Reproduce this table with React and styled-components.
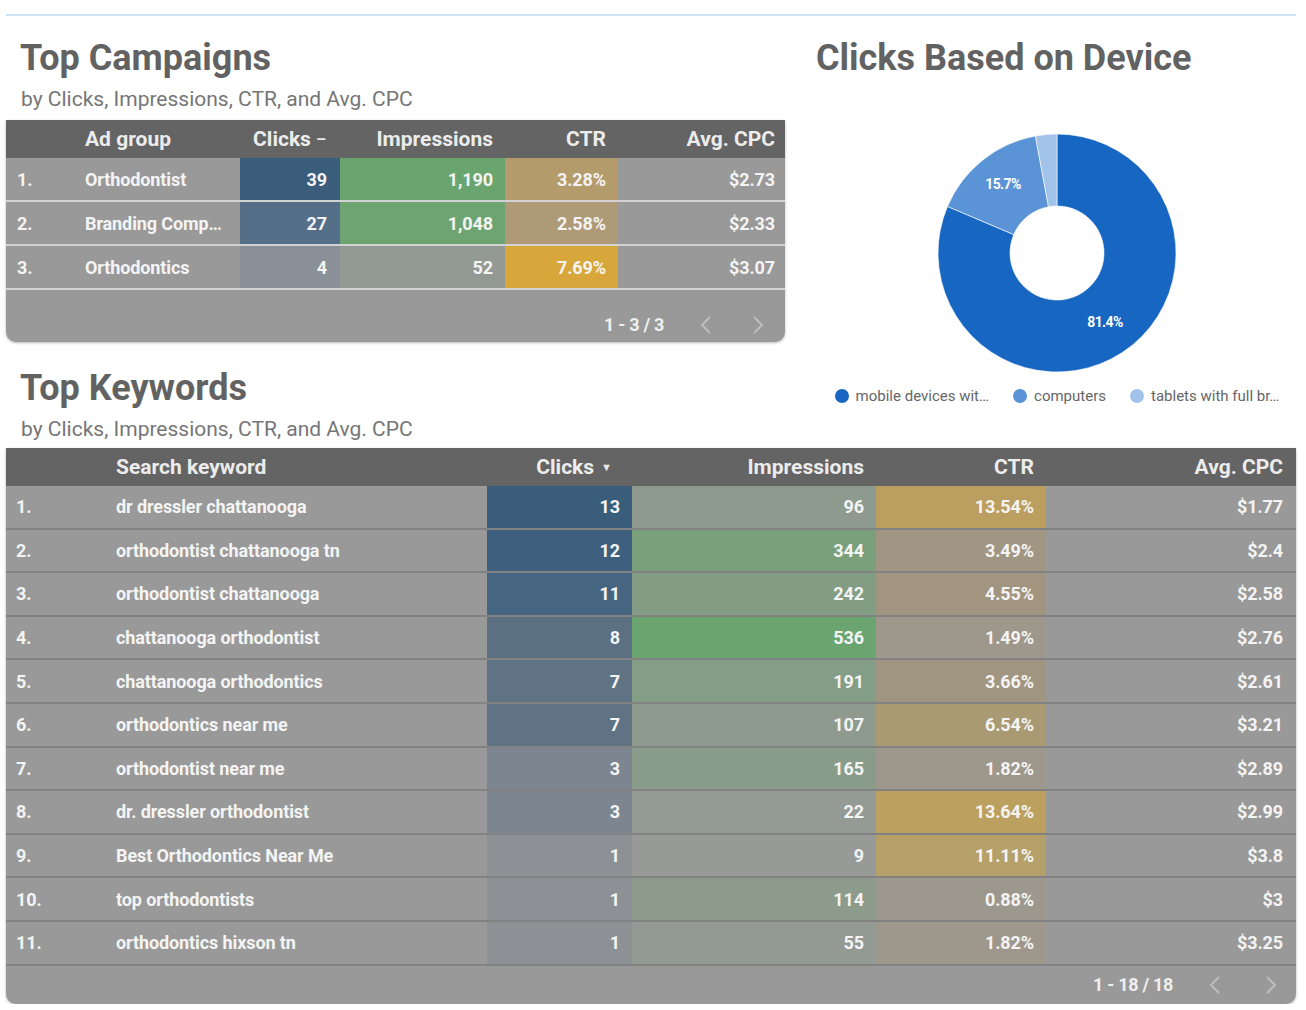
import React from 'react';
import styled, { createGlobalStyle } from 'styled-components';

const GlobalStyle = createGlobalStyle`
  body {
    margin: 0;
    background: #ffffff;
    font-family: Roboto, "Liberation Sans", Arial, sans-serif;
  }
`;

const Page = styled.div`
  width: 1306px;
  box-sizing: border-box;
  padding: 14px 10px 0 6px;
`;

const TopRule = styled.div`
  height: 2px;
  background: #cbe4f9;
`;

const Layout = styled.div`
  display: grid;
  grid-template-columns: 779px 1fr;
  column-gap: 33px;
  margin-top: 21px;
`;

const CampaignBlock = styled.section`
  grid-column: 1;
  grid-row: 1;
`;

const DeviceBlock = styled.section`
  grid-column: 2;
  grid-row: 1 / span 2;
  display: flex;
  flex-direction: column;
`;

const KeywordsHead = styled.div`
  grid-column: 1;
  grid-row: 2;
  margin-top: 25px;
`;

const KeywordsBlock = styled.section`
  grid-column: 1 / -1;
  grid-row: 3;
`;

const Title = styled.h2`
  margin: 0;
  padding-left: ${(p) => (p.$flush ? '0' : '14px')};
  margin-left: ${(p) => (p.$flush ? '-2px' : '0')};
  font-size: 36px;
  line-height: 42px;
  font-weight: 700;
  color: #626262;
  letter-spacing: 0;
`;

const Subtitle = styled.p`
  margin: 8px 0 0;
  padding-left: 15px;
  font-size: 21px;
  line-height: 24px;
  color: #767676;
`;

const TableCard = styled.div`
  margin-top: ${(p) => p.$gap}px;
  background: #999999;
  border-radius: 0 0 10px 10px;
  overflow: hidden;
  box-shadow: 0 1px 3px rgba(0, 0, 0, 0.28);
`;

const Row = styled.div`
  display: grid;
  grid-template-columns: ${(p) => p.$cols};
  height: ${(p) => p.$h};
  box-sizing: border-box;
  border-bottom: 2px solid ${(p) => p.$line};
`;

const HeadRow = styled.div`
  display: grid;
  grid-template-columns: ${(p) => p.$cols};
  height: 38px;
  background: #646464;
`;

const Cell = styled.div`
  display: flex;
  align-items: center;
  justify-content: ${(p) => (p.$right ? 'flex-end' : 'flex-start')};
  padding: 0 ${(p) => (p.$pr != null ? p.$pr : 12)}px 0 ${(p) => p.$pl || 0}px;
  background: ${(p) => p.$bg || 'transparent'};
  color: #f4f4f4;
  font-size: 18px;
  font-weight: 700;
  letter-spacing: -0.1px;
  white-space: nowrap;
  overflow: hidden;
`;

const HeadCell = styled(Cell)`
  font-size: 21px;
  letter-spacing: 0;
  color: #ececec;
`;

const SortMark = styled.span`
  margin-left: ${(p) => p.$gap}px;
  font-size: ${(p) => p.$size}px;
  color: #e8e8e8;
`;

const Pager = styled.div`
  display: flex;
  justify-content: flex-end;
  align-items: ${(p) => (p.$bottom ? 'flex-end' : 'center')};
  height: ${(p) => p.$h}px;
  box-sizing: border-box;
  padding: 0 ${(p) => p.$pr}px ${(p) => (p.$bottom ? 6 : 0)}px 0;
`;

const PageLabel = styled.span`
  font-size: 18px;
  line-height: 22px;
  font-weight: 700;
  color: #efefef;
  letter-spacing: -0.3px;
  margin-right: 35px;
`;

const Chevron = styled.svg`
  width: 13px;
  height: 20px;
  margin-left: ${(p) => p.$ml || 0}px;
  margin-bottom: ${(p) => (p.$lift ? 1 : 0)}px;
`;

const ChartArea = styled.div`
  display: flex;
  justify-content: center;
  margin-top: 54px;
`;

const Legend = styled.div`
  display: flex;
  justify-content: center;
  gap: 24px;
  margin-top: 13px;
`;

const LegendItem = styled.div`
  display: flex;
  align-items: center;
  gap: 7px;
  font-size: 15px;
  line-height: 20px;
  color: #666666;
  letter-spacing: 0;
  white-space: nowrap;
`;

const Dot = styled.span`
  width: 14px;
  height: 14px;
  border-radius: 50%;
  background: ${(p) => p.$c};
`;

const Arrow = ({ dir, ml, lift }) => (
  <Chevron viewBox="0 0 13 20" $ml={ml} $lift={lift}>
    <polyline
      points={dir === 'left' ? '11,2 3,10 11,18' : '2,2 10,10 2,18'}
      fill="none"
      stroke="#bdbdbd"
      strokeWidth="2"
    />
  </Chevron>
);

const campaignCols = '79px 155px 100px 165px 113px 167px';
const campaigns = [
  ['1.', 'Orthodontist', '39', '#3a5d7c', '1,190', '#6aa56f', '3.28%', '#b39b6c', '$2.73'],
  ['2.', 'Branding Comp…', '27', '#556f88', '1,048', '#6ea471', '2.58%', '#ae9a76', '$2.33'],
  ['3.', 'Orthodontics', '4', '#8a9097', '52', '#939a93', '7.69%', '#d8a73b', '$3.07'],
];

const keywordCols = '110px 371px 145px 244px 170px 250px';
const keywords = [
  ['1.', 'dr dressler chattanooga', '13', '#3a5d7c', '96', '#8e9a8e', '13.54%', '#bb9f60', '$1.77'],
  ['2.', 'orthodontist chattanooga tn', '12', '#3f5f7e', '344', '#79a07b', '3.49%', '#a09683', '$2.4'],
  ['3.', 'orthodontist chattanooga', '11', '#466580', '242', '#829d84', '4.55%', '#a19580', '$2.58'],
  ['4.', 'chattanooga orthodontist', '8', '#5b7083', '536', '#6aa56f', '1.49%', '#9e988c', '$2.76'],
  ['5.', 'chattanooga orthodontics', '7', '#5f7385', '191', '#849d86', '3.66%', '#a09580', '$2.61'],
  ['6.', 'orthodontics near me', '7', '#5f7385', '107', '#8e9a8e', '6.54%', '#aa9a74', '$3.21'],
  ['7.', 'orthodontist near me', '3', '#7d8690', '165', '#889c89', '1.82%', '#9e978b', '$2.89'],
  ['8.', 'dr. dressler orthodontist', '3', '#7d8690', '22', '#949a94', '13.64%', '#bba05f', '$2.99'],
  ['9.', 'Best Orthodontics Near Me', '1', '#8d9196', '9', '#979a97', '11.11%', '#b6a06a', '$3.8'],
  ['10.', 'top orthodontists', '1', '#8d9196', '114', '#8c9b8c', '0.88%', '#9c988e', '$3'],
  ['11.', 'orthodontics hixson tn', '1', '#8d9196', '55', '#939a93', '1.82%', '#9e978b', '$3.25'],
];

const slices = [
  { label: 'mobile devices wit…', value: 81.4, color: '#1766c1', text: '81.4%', tx: 168, ty: 194 },
  { label: 'computers', value: 15.7, color: '#5b94d6', text: '15.7%', tx: 66, ty: 56 },
  { label: 'tablets with full br…', value: 2.9, color: '#a2c3e9' },
];

function arcPath(cx, cy, R, r, a0, a1) {
  const rad = (a) => (a * Math.PI) / 180;
  const pt = (rr, a) => [cx + rr * Math.sin(rad(a)), cy - rr * Math.cos(rad(a))];
  const large = a1 - a0 > 180 ? 1 : 0;
  const [x0, y0] = pt(R, a0);
  const [x1, y1] = pt(R, a1);
  const [x2, y2] = pt(r, a1);
  const [x3, y3] = pt(r, a0);
  return `M${x0} ${y0} A${R} ${R} 0 ${large} 1 ${x1} ${y1} L${x2} ${y2} A${r} ${r} 0 ${large} 0 ${x3} ${y3} Z`;
}

const Donut = () => {
  let start = 0;
  const total = slices.reduce((s, d) => s + d.value, 0);
  return (
    <svg width="240" height="240" viewBox="0 0 240 240">
      {slices.map((s) => {
        const end = start + (s.value / total) * 360;
        const d = arcPath(120, 120, 119, 47, start, end);
        start = end;
        return <path key={s.label} d={d} fill={s.color} stroke="#ffffff" strokeWidth="0.6" />;
      })}
      {slices
        .filter((s) => s.text)
        .map((s) => (
          <text
            key={s.text}
            x={s.tx}
            y={s.ty}
            textAnchor="middle"
            fill="#ffffff"
            fontFamily="Roboto, 'Liberation Sans', sans-serif"
            fontSize="14"
            fontWeight="700"
            letterSpacing="-0.6"
          >
            {s.text}
          </text>
        ))}
    </svg>
  );
};

export default function App() {
  return (
    <Page>
      <GlobalStyle />
      <TopRule />
      <Layout>
        <CampaignBlock>
          <Title>Top Campaigns</Title>
          <Subtitle>by Clicks, Impressions, CTR, and Avg. CPC</Subtitle>
          <TableCard $gap={9}>
            <HeadRow $cols={campaignCols}>
              <HeadCell />
              <HeadCell>Ad group</HeadCell>
              <HeadCell $right $pr={14}>
                Clicks<SortMark $gap={5} $size={16}>–</SortMark>
              </HeadCell>
              <HeadCell $right>Impressions</HeadCell>
              <HeadCell $right>CTR</HeadCell>
              <HeadCell $right $pr={10}>Avg. CPC</HeadCell>
            </HeadRow>
            {campaigns.map((r) => (
              <Row key={r[0]} $cols={campaignCols} $h="44px" $line="#d2d2d2">
                <Cell $pl={11}>{r[0]}</Cell>
                <Cell>{r[1]}</Cell>
                <Cell $right $pr={13} $bg={r[3]}>{r[2]}</Cell>
                <Cell $right $bg={r[5]}>{r[4]}</Cell>
                <Cell $right $bg={r[7]}>{r[6]}</Cell>
                <Cell $right $pr={10}>{r[8]}</Cell>
              </Row>
            ))}
            <Pager $h={52} $pr={20} $bottom>
              <PageLabel>1 - 3 / 3</PageLabel>
              <Arrow dir="left" lift />
              <Arrow dir="right" ml={40} lift />
            </Pager>
          </TableCard>
        </CampaignBlock>

        <DeviceBlock>
          <Title $flush>Clicks Based on Device</Title>
          <ChartArea>
            <Donut />
          </ChartArea>
          <Legend>
            {slices.map((s) => (
              <LegendItem key={s.label}>
                <Dot $c={s.color} />
                {s.label}
              </LegendItem>
            ))}
          </Legend>
        </DeviceBlock>

        <KeywordsHead>
          <Title>Top Keywords</Title>
          <Subtitle>by Clicks, Impressions, CTR, and Avg. CPC</Subtitle>
        </KeywordsHead>

        <KeywordsBlock>
          <TableCard $gap={7}>
            <HeadRow $cols={keywordCols}>
              <HeadCell />
              <HeadCell>Search keyword</HeadCell>
              <HeadCell $right $pr={20}>
                Clicks<SortMark $gap={7} $size={11}>▼</SortMark>
              </HeadCell>
              <HeadCell $right>Impressions</HeadCell>
              <HeadCell $right>CTR</HeadCell>
              <HeadCell $right $pr={13}>Avg. CPC</HeadCell>
            </HeadRow>
            {keywords.map((r) => (
              <Row key={r[0]} $cols={keywordCols} $h="43.6px" $line="#828282">
                <Cell $pl={10}>{r[0]}</Cell>
                <Cell>{r[1]}</Cell>
                <Cell $right $bg={r[3]}>{r[2]}</Cell>
                <Cell $right $bg={r[5]}>{r[4]}</Cell>
                <Cell $right $bg={r[7]}>{r[6]}</Cell>
                <Cell $right $pr={13}>{r[8]}</Cell>
              </Row>
            ))}
            <Pager $h={38} $pr={18}>
              <PageLabel>1 - 18 / 18</PageLabel>
              <Arrow dir="left" />
              <Arrow dir="right" ml={44} />
            </Pager>
          </TableCard>
        </KeywordsBlock>
      </Layout>
    </Page>
  );
}
